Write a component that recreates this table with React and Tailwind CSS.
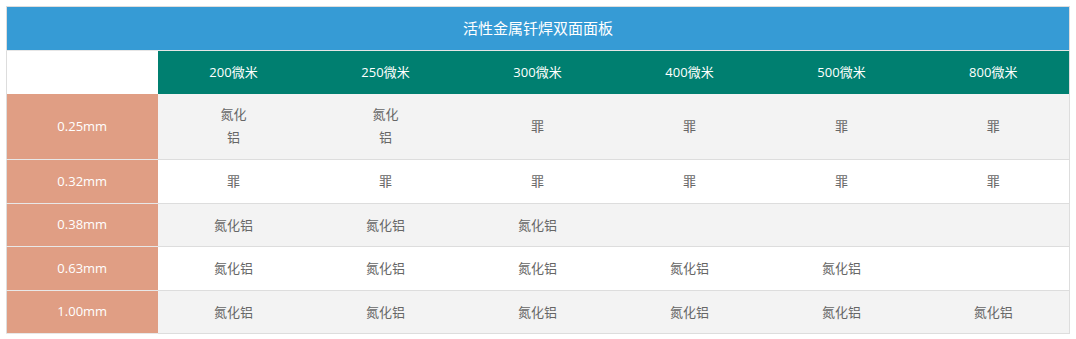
const cols = ["200微米", "250微米", "300微米", "400微米", "500微米", "800微米"];

const rows = [
  { size: "0.25mm", cells: ["氮化\n铝", "氮化\n铝", "罪", "罪", "罪", "罪"], h: "h-[66px]" },
  { size: "0.32mm", cells: ["罪", "罪", "罪", "罪", "罪", "罪"], h: "h-[44px]" },
  { size: "0.38mm", cells: ["氮化铝", "氮化铝", "氮化铝", "", "", ""], h: "h-[43px]" },
  { size: "0.63mm", cells: ["氮化铝", "氮化铝", "氮化铝", "氮化铝", "氮化铝", ""], h: "h-[44px]" },
  { size: "1.00mm", cells: ["氮化铝", "氮化铝", "氮化铝", "氮化铝", "氮化铝", "氮化铝"], h: "h-[43px]" },
];

export default function App() {
  return (
    <div
      className="bg-white pl-[6px] pt-[6px]"
      style={{ fontFamily: '"Open Sans", "Noto Sans CJK SC", sans-serif' }}
    >
      <table className="w-[1064px] table-fixed border-collapse border border-[#dddddd] text-[13px]">
        <colgroup>
          <col className="w-[151px]" />
          {cols.map((c) => (
            <col key={c} />
          ))}
        </colgroup>
        <thead>
          <tr>
            <th
              colSpan={7}
              className="h-[44px] bg-[#369bd5] text-center text-[15px] font-normal text-white"
            >
              活性金属钎焊双面面板
            </th>
          </tr>
          <tr className="border-t border-[#e6e6e6]">
            <th className="h-[43px] bg-white"></th>
            {cols.map((c) => (
              <th key={c} className="bg-[#007f70] text-center font-normal text-white">
                {c}
              </th>
            ))}
          </tr>
        </thead>
        <tbody>
          {rows.map((r, i) => (
            <tr key={r.size} className={i % 2 === 0 ? "bg-[#f3f3f3]" : "bg-white"}>
              <td
                className={`${r.h} border-b border-[#e8e8e8] bg-[#e09e84] text-center text-white`}
              >
                {r.size}
              </td>
              {r.cells.map((c, j) => (
                <td
                  key={j}
                  className="border-b border-[#dddddd] text-center leading-[23px] text-[#666666]"
                >
                  {c.split("\n").map((line, k) => (
                    <div key={k}>{line}</div>
                  ))}
                </td>
              ))}
            </tr>
          ))}
        </tbody>
      </table>
    </div>
  );
}
